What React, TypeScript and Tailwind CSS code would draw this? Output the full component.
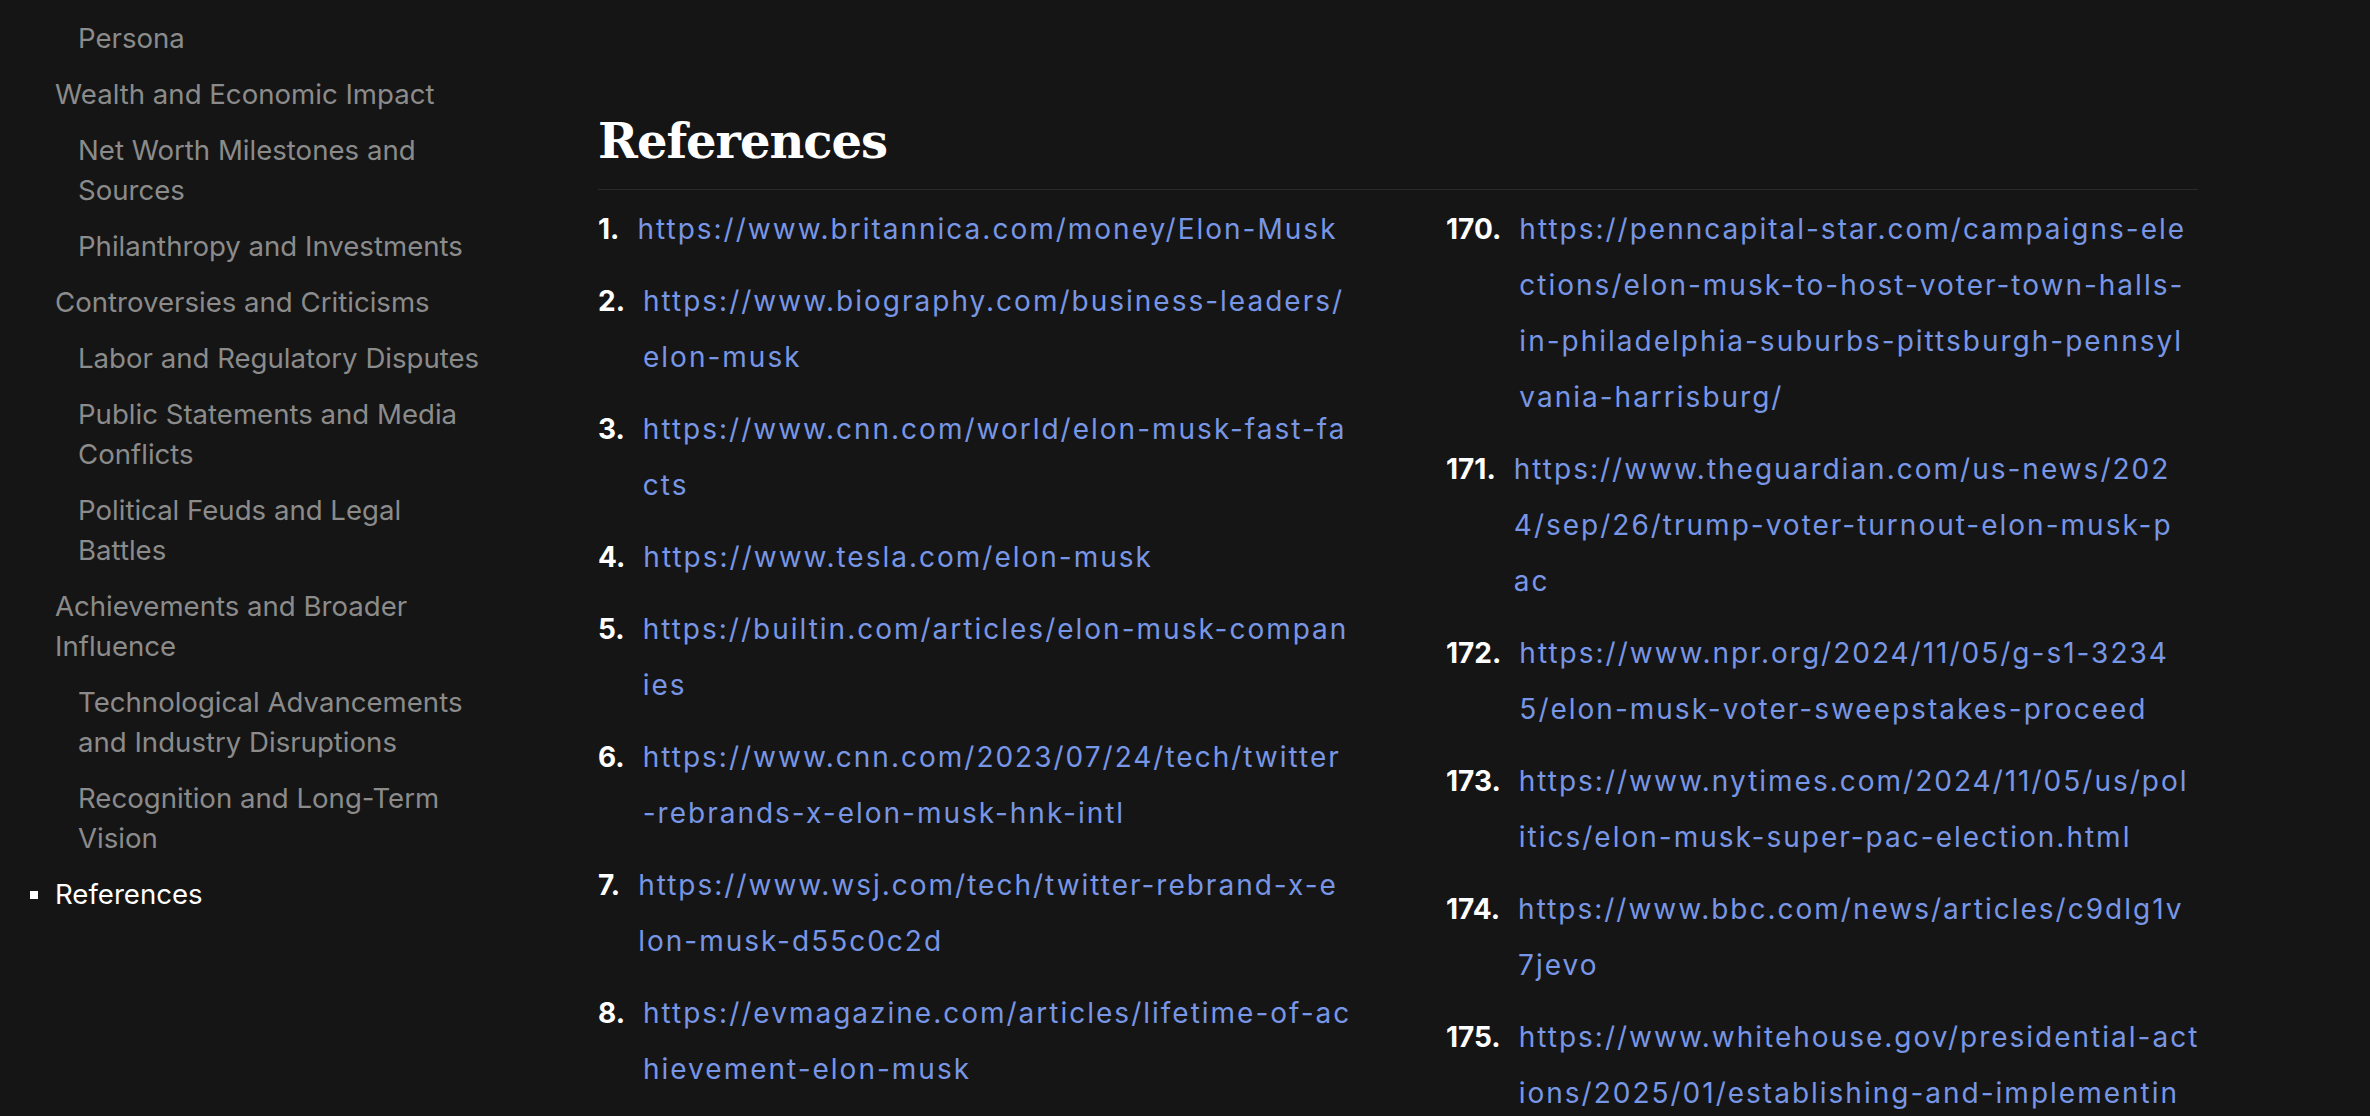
type NavItem = { lines: string[]; level: 1 | 2; active?: boolean }

const nav: NavItem[] = [
  { lines: ['Persona'], level: 2 },
  { lines: ['Wealth and Economic Impact'], level: 1 },
  { lines: ['Net Worth Milestones and', 'Sources'], level: 2 },
  { lines: ['Philanthropy and Investments'], level: 2 },
  { lines: ['Controversies and Criticisms'], level: 1 },
  { lines: ['Labor and Regulatory Disputes'], level: 2 },
  { lines: ['Public Statements and Media', 'Conflicts'], level: 2 },
  { lines: ['Political Feuds and Legal', 'Battles'], level: 2 },
  { lines: ['Achievements and Broader', 'Influence'], level: 1 },
  { lines: ['Technological Advancements', 'and Industry Disruptions'], level: 2 },
  { lines: ['Recognition and Long-Term', 'Vision'], level: 2 },
  { lines: ['References'], level: 1, active: true },
]

type Ref = { n: number; lines: string[] }

// links are broken by hand where the original column wraps them
const leftRefs: Ref[] = [
  { n: 1, lines: ['https://www.britannica.com/money/Elon-Musk'] },
  { n: 2, lines: ['https://www.biography.com/business-leaders/', 'elon-musk'] },
  { n: 3, lines: ['https://www.cnn.com/world/elon-musk-fast-fa', 'cts'] },
  { n: 4, lines: ['https://www.tesla.com/elon-musk'] },
  { n: 5, lines: ['https://builtin.com/articles/elon-musk-compan', 'ies'] },
  { n: 6, lines: ['https://www.cnn.com/2023/07/24/tech/twitter', '-rebrands-x-elon-musk-hnk-intl'] },
  { n: 7, lines: ['https://www.wsj.com/tech/twitter-rebrand-x-e', 'lon-musk-d55c0c2d'] },
  { n: 8, lines: ['https://evmagazine.com/articles/lifetime-of-ac', 'hievement-elon-musk'] },
]

const rightRefs: Ref[] = [
  {
    n: 170,
    lines: [
      'https://penncapital-star.com/campaigns-ele',
      'ctions/elon-musk-to-host-voter-town-halls-',
      'in-philadelphia-suburbs-pittsburgh-pennsyl',
      'vania-harrisburg/',
    ],
  },
  { n: 171, lines: ['https://www.theguardian.com/us-news/202', '4/sep/26/trump-voter-turnout-elon-musk-p', 'ac'] },
  { n: 172, lines: ['https://www.npr.org/2024/11/05/g-s1-3234', '5/elon-musk-voter-sweepstakes-proceed'] },
  { n: 173, lines: ['https://www.nytimes.com/2024/11/05/us/pol', 'itics/elon-musk-super-pac-election.html'] },
  { n: 174, lines: ['https://www.bbc.com/news/articles/c9dlg1v', '7jevo'] },
  { n: 175, lines: ['https://www.whitehouse.gov/presidential-act', 'ions/2025/01/establishing-and-implementin'] },
]

function RefColumn({ refs }: { refs: Ref[] }) {
  return (
    <ol className="flex flex-col gap-4">
      {refs.map((r) => (
        <li key={r.n} className="flex gap-[18px] text-[28px] leading-[56px]">
          <span className="shrink-0 font-bold text-white">{r.n}.</span>
          <a href="#" className="text-[#7896e6] tracking-[2px] whitespace-nowrap">
            {r.lines.map((l, i) => (
              <span key={i} className="block">
                {l}
              </span>
            ))}
          </a>
        </li>
      ))}
    </ol>
  )
}

export default function App() {
  return (
    <div className="h-screen overflow-hidden bg-[#151515] flex font-['Inter','Noto_Sans',sans-serif]">
      {/* Table of contents */}
      <aside className="w-[490px] shrink-0 pt-[18px] pl-[55px]">
        <ul className="flex flex-col gap-4">
          {nav.map((item, i) => (
            <li
              key={i}
              className={`relative text-[27.6px] leading-[40px] whitespace-nowrap ${item.level === 2 ? 'pl-[23px]' : ''} ${item.active ? 'text-white' : 'text-[#8b8b8b]'}`}
            >
              {item.active && <span className="absolute left-[-25px] top-[17px] w-2 h-2 bg-white" />}
              {item.lines.map((l, j) => (
                <span key={j} className="block">
                  {l}
                </span>
              ))}
            </li>
          ))}
        </ul>
      </aside>

      {/* Article */}
      <main className="flex-1 min-w-0 pl-[108px] pr-[172px] pt-[112px]">
        <h2 className="font-['DejaVu_Serif',serif] font-bold text-[48px] leading-[58px] tracking-[-1px] text-white pb-[19px] border-b border-[#2a2a2a]">
          References
        </h2>
        <div className="grid grid-cols-2 gap-x-24 mt-[11px]">
          <RefColumn refs={leftRefs} />
          <RefColumn refs={rightRefs} />
        </div>
      </main>
    </div>
  )
}
